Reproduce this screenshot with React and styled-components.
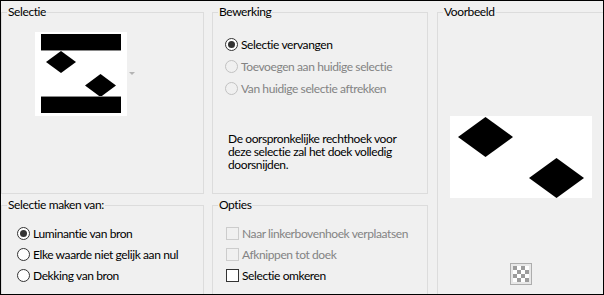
import styled, { createGlobalStyle } from 'styled-components';

const GlobalStyle = createGlobalStyle`
	html, body {
		margin: 0;
		padding: 0;
		background: #f0f0f0;
	}
	body {
		font-family: Lato, "Noto Sans", sans-serif;
		font-size: 12px;
		letter-spacing: -0.4px;
		color: #000;
	}
`;

const SDialog = styled.div`
	width: 604px;
	height: 295px;
	box-sizing: border-box;
	border: 1px solid #000;
	background: #f0f0f0;
	overflow: hidden;
	display: grid;
	grid-template-columns: 203px 216px 180px;
	grid-template-rows: 182px 100px;
	column-gap: 8px;
	row-gap: 11px;
	padding-top: 11px;
`;

const SGroup = styled.div`
	position: relative;
	box-sizing: border-box;
	border: 1px solid #dcdcdc;
	grid-column: ${({ $col }) => $col};
	grid-row: ${({ $row }) => $row};
	margin-left: ${({ $shift }) => $shift || 0}px;
	display: flex;
	flex-direction: column;
`;

// legend sits on the group's top border line
const SLegend = styled.span`
	position: absolute;
	top: -9px;
	left: 5px;
	padding: 0 1px;
	line-height: 16px;
	background: #f0f0f0;
	white-space: nowrap;
`;

const SThumbRow = styled.div`
	display: flex;
	align-items: center;
	gap: 2px;
	margin: 19px 0 0 33px;
`;

const SThumb = styled.div`
	width: 92px;
	height: 84px;
	background: #fff;
	svg {
		display: block;
	}
`;

const SDropArrow = styled.span`
	width: 0;
	height: 0;
	border-left: 3px solid transparent;
	border-right: 3px solid transparent;
	border-top: 3px solid #b4b4b4;
	margin-top: -1px;
`;

const SOptionList = styled.div`
	display: flex;
	flex-direction: column;
	padding: ${({ $top }) => $top}px 0 0 ${({ $left }) => $left}px;
`;

const SOption = styled.div`
	display: flex;
	align-items: center;
	gap: ${({ $gap }) => $gap || 3}px;
	height: ${({ $h }) => $h}px;
	color: ${({ $disabled }) => ($disabled ? '#838383' : '#000')};
	white-space: nowrap;
`;

const SRadio = styled.span`
	box-sizing: border-box;
	width: 13px;
	height: 13px;
	flex: none;
	border-radius: 50%;
	border: 1px solid ${({ $disabled }) => ($disabled ? '#c2c2c2' : '#333')};
	background: ${({ $disabled }) => ($disabled ? '#f0f0f0' : '#fff')};
	display: flex;
	align-items: center;
	justify-content: center;
	&::after {
		content: '';
		display: ${({ $checked }) => ($checked ? 'block' : 'none')};
		width: 7px;
		height: 7px;
		border-radius: 50%;
		background: #333;
	}
`;

const SCheck = styled.span`
	box-sizing: border-box;
	width: 13px;
	height: 13px;
	flex: none;
	border: 1px solid ${({ $disabled }) => ($disabled ? '#cccccc' : '#333')};
	background: ${({ $disabled }) => ($disabled ? '#f0f0f0' : '#fff')};
`;

const SNote = styled.p`
	margin: 33px 0 0 15px;
	width: 175px;
	line-height: 13px;
`;

const SPreviewCol = styled.div`
	display: flex;
	flex-direction: column;
	align-items: center;
	width: 142px;
	margin: 103px 0 0 12px;
`;

const SPreview = styled.div`
	width: 142px;
	height: 82px;
	background: #fff;
	svg {
		display: block;
	}
`;

const STransparency = styled.div`
	box-sizing: border-box;
	width: 22px;
	height: 22px;
	margin-top: 65px;
	padding: 2px;
	border: 1px solid #adadad;
	background: #e8e8e8;
	svg {
		display: block;
	}
`;

const Diamond = ({ cx, cy, hw, hh }) => (
	<polygon
		points={`${cx},${cy - hh} ${cx + hw},${cy} ${cx},${cy + hh} ${cx - hw},${cy}`}
		fill="#000"
	/>
);

const Radio = ({ checked, disabled, children, h }) => (
	<SOption $disabled={disabled} $h={h}>
		<SRadio $checked={checked} $disabled={disabled} />
		{children}
	</SOption>
);

const Check = ({ disabled, children, h }) => (
	<SOption $disabled={disabled} $h={h}>
		<SCheck $disabled={disabled} />
		{children}
	</SOption>
);

const Checker = () => {
	const cells = [];
	for (let r = 0; r < 4; r++) {
		for (let c = 0; c < 4; c++) {
			cells.push(
				<rect
					key={`${r}-${c}`}
					x={c * 4}
					y={r * 4}
					width="4"
					height="4"
					fill={(r + c) % 2 === 0 ? '#9c9c9c' : '#ffffff'}
				/>
			);
		}
	}
	return (
		<svg width="16" height="16" viewBox="0 0 16 16">
			{cells}
		</svg>
	);
};

const App = () => (
	<>
		<GlobalStyle />
		<SDialog>
			<SGroup $col={1} $row={1}>
				<SLegend>Selectie</SLegend>
				<SThumbRow>
					<SThumb>
						<svg width="92" height="84" viewBox="0 0 92 84">
							<rect x="6" y="2" width="80" height="16" fill="#000" />
							<rect x="6" y="18" width="80" height="1" fill="#8a8a8a" />
							<Diamond cx={26} cy={30} hw={15} hh={11} />
							<Diamond cx={65.5} cy={53.5} hw={15.5} hh={11.5} />
							<rect x="6" y="64" width="80" height="1" fill="#8a8a8a" />
							<rect x="6" y="65" width="80" height="16" fill="#000" />
						</svg>
					</SThumb>
					<SDropArrow />
				</SThumbRow>
			</SGroup>

			<SGroup $col={2} $row={1}>
				<SLegend>Bewerking</SLegend>
				<SOptionList $top={20} $left={12}>
					<Radio h={22} checked>
						Selectie vervangen
					</Radio>
					<Radio h={22} disabled>
						Toevoegen aan huidige selectie
					</Radio>
					<Radio h={22} disabled>
						Van huidige selectie aftrekken
					</Radio>
				</SOptionList>
				<SNote>
					De oorspronkelijke rechthoek voor deze selectie zal het doek volledig
					doorsnijden.
				</SNote>
			</SGroup>

			<SGroup $col={3} $row="1 / span 2" $shift={1}>
				<SLegend>Voorbeeld</SLegend>
				<SPreviewCol>
					<SPreview>
						<svg width="142" height="82" viewBox="0 0 142 82">
							<Diamond cx={35.5} cy={21} hw={27.5} hh={20} />
							<Diamond cx={106.5} cy={62} hw={27.5} hh={20} />
						</svg>
					</SPreview>
					<STransparency>
						<Checker />
					</STransparency>
				</SPreviewCol>
			</SGroup>

			<SGroup $col={1} $row={2}>
				<SLegend>Selectie maken van:</SLegend>
				<SOptionList $top={17} $left={15}>
					<Radio h={21} checked>
						Luminantie van bron
					</Radio>
					<Radio h={21}>Elke waarde niet gelijk aan nul</Radio>
					<Radio h={21}>Dekking van bron</Radio>
				</SOptionList>
			</SGroup>

			<SGroup $col={2} $row={2}>
				<SLegend>Opties</SLegend>
				<SOptionList $top={17} $left={13}>
					<Check h={21} disabled>
						Naar linkerbovenhoek verplaatsen
					</Check>
					<Check h={21} disabled>
						Afknippen tot doek
					</Check>
					<Check h={21}>Selectie omkeren</Check>
				</SOptionList>
			</SGroup>
		</SDialog>
	</>
);

export default App;
